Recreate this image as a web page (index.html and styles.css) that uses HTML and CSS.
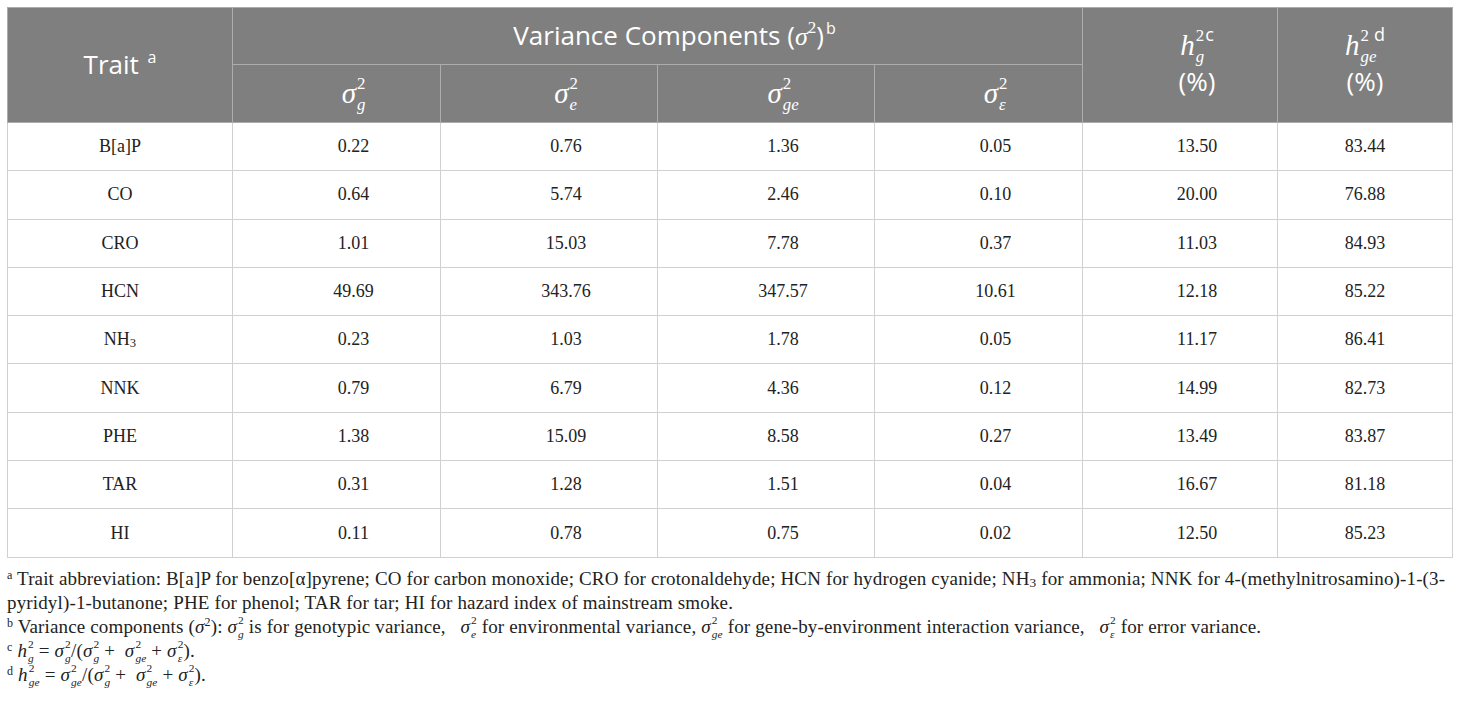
FILE: index.html
```html
<!DOCTYPE html>
<html lang="en">
<head>
  <meta charset="UTF-8">
  <title>Variance components</title>
  <link rel="stylesheet" href="styles.css">
</head>
<body>
  <table class="data">
    <colgroup>
      <col style="width:225px">
      <col style="width:208px">
      <col style="width:217px">
      <col style="width:217px">
      <col style="width:208px">
      <col style="width:195px">
      <col style="width:175px">
    </colgroup>
    <thead>
      <tr class="head-top">
        <th rowspan="2" class="mid">Trait <sup class="fn">a</sup></th>
        <th colspan="4" class="off">Variance Components (<i class="m">σ</i><sup class="sq">2</sup>)<sup class="fn">b</sup></th>
        <th rowspan="2" class="off">
          <div class="m big hh"><i>h</i><span class="ss"><span class="up">2<span class="fnl">c</span></span><span class="dn"><i>g</i></span></span></div>
          <div class="pct">(%)</div>
        </th>
        <th rowspan="2" class="mid">
          <div class="m big hh"><i>h</i><span class="ss"><span class="up">2 <span class="fnl">d</span></span><span class="dn"><i>ge</i></span></span></div>
          <div class="pct">(%)</div>
        </th>
      </tr>
      <tr class="head-sub">
        <th class="off"><span class="m big"><i>σ</i><span class="ss"><span class="up">2</span><span class="dn"><i>g</i></span></span></span></th>
        <th class="off"><span class="m big"><i>σ</i><span class="ss"><span class="up">2</span><span class="dn"><i>e</i></span></span></span></th>
        <th class="off"><span class="m big"><i>σ</i><span class="ss"><span class="up">2</span><span class="dn"><i>ge</i></span></span></span></th>
        <th class="off"><span class="m big"><i>σ</i><span class="ss"><span class="up">2</span><span class="dn"><i>ε</i></span></span></span></th>
      </tr>
    </thead>
    <tbody>
      <tr><td class="mid">B[a]P</td><td class="off">0.22</td><td class="off">0.76</td><td class="off">1.36</td><td class="off">0.05</td><td class="off">13.50</td><td class="mid">83.44</td></tr>
      <tr><td class="mid">CO</td><td class="off">0.64</td><td class="off">5.74</td><td class="off">2.46</td><td class="off">0.10</td><td class="off">20.00</td><td class="mid">76.88</td></tr>
      <tr><td class="mid">CRO</td><td class="off">1.01</td><td class="off">15.03</td><td class="off">7.78</td><td class="off">0.37</td><td class="off">11.03</td><td class="mid">84.93</td></tr>
      <tr><td class="mid">HCN</td><td class="off">49.69</td><td class="off">343.76</td><td class="off">347.57</td><td class="off">10.61</td><td class="off">12.18</td><td class="mid">85.22</td></tr>
      <tr><td class="mid">NH<sub class="chem">3</sub></td><td class="off">0.23</td><td class="off">1.03</td><td class="off">1.78</td><td class="off">0.05</td><td class="off">11.17</td><td class="mid">86.41</td></tr>
      <tr><td class="mid">NNK</td><td class="off">0.79</td><td class="off">6.79</td><td class="off">4.36</td><td class="off">0.12</td><td class="off">14.99</td><td class="mid">82.73</td></tr>
      <tr><td class="mid">PHE</td><td class="off">1.38</td><td class="off">15.09</td><td class="off">8.58</td><td class="off">0.27</td><td class="off">13.49</td><td class="mid">83.87</td></tr>
      <tr><td class="mid">TAR</td><td class="off">0.31</td><td class="off">1.28</td><td class="off">1.51</td><td class="off">0.04</td><td class="off">16.67</td><td class="mid">81.18</td></tr>
      <tr><td class="mid">HI</td><td class="off">0.11</td><td class="off">0.78</td><td class="off">0.75</td><td class="off">0.02</td><td class="off">12.50</td><td class="mid">85.23</td></tr>
    </tbody>
  </table>

  <!-- Footnotes -->
  <div class="notes">
    <p><sup>a</sup> Trait abbreviation: B[a]P for benzo[α]pyrene; CO for carbon monoxide; CRO for crotonaldehyde; HCN for hydrogen cyanide; NH<sub class="chem">3</sub> for ammonia; NNK for 4-(methylnitrosamino)-1-(3-<br>pyridyl)-1-butanone; PHE for phenol; TAR for tar; HI for hazard index of mainstream smoke.</p>
    <p><sup>b</sup> Variance components (<i>σ</i><sup class="sq">2</sup>): <span class="m"><i>σ</i><span class="ss"><span class="up">2</span><span class="dn"><i>g</i></span></span></span> is for genotypic variance, &nbsp; <span class="m"><i>σ</i><span class="ss"><span class="up">2</span><span class="dn"><i>e</i></span></span></span> for environmental variance, <span class="m"><i>σ</i><span class="ss"><span class="up">2</span><span class="dn"><i>ge</i></span></span></span> for gene-by-environment interaction variance, &nbsp; <span class="m"><i>σ</i><span class="ss"><span class="up">2</span><span class="dn"><i>ε</i></span></span></span> for error variance.</p>
    <p><sup>c</sup> <span class="m"><i>h</i><span class="ss"><span class="up">2</span><span class="dn"><i>g</i></span></span></span> = <span class="m"><i>σ</i><span class="ss"><span class="up">2</span><span class="dn"><i>g</i></span></span></span>/(<span class="m"><i>σ</i><span class="ss"><span class="up">2</span><span class="dn"><i>g</i></span></span></span> + &nbsp;<span class="m"><i>σ</i><span class="ss"><span class="up">2</span><span class="dn"><i>ge</i></span></span></span> + <span class="m"><i>σ</i><span class="ss"><span class="up">2</span><span class="dn"><i>ε</i></span></span></span>).</p>
    <p><sup>d</sup> <span class="m"><i>h</i><span class="ss"><span class="up">2</span><span class="dn"><i>ge</i></span></span></span> = <span class="m"><i>σ</i><span class="ss"><span class="up">2</span><span class="dn"><i>ge</i></span></span></span>/(<span class="m"><i>σ</i><span class="ss"><span class="up">2</span><span class="dn"><i>g</i></span></span></span> + &nbsp;<span class="m"><i>σ</i><span class="ss"><span class="up">2</span><span class="dn"><i>ge</i></span></span></span> + <span class="m"><i>σ</i><span class="ss"><span class="up">2</span><span class="dn"><i>ε</i></span></span></span>).</p>
  </div>
</body>
</html>
```

FILE: styles.css
```css
/* General Styling */
body {
  margin: 0;
  padding: 7px;
  background: #fff;
  color: #222;
  font-family: 'Liberation Serif', serif;
}

.data {
  width: 1445px;
  table-layout: fixed;
  border-collapse: collapse;
  border: 1px solid #c6c6c6;
}

/* Header */
.data th {
  background: #7f7f7f;
  color: #fff;
  font-family: 'Open Sans', sans-serif;
  font-weight: normal;
  font-size: 26px;
  border: 1px solid #acacac;
  text-align: center;
  vertical-align: middle;
  padding: 0;
  line-height: 1.2;
}

.head-top th {
  height: 56px;
}

.head-sub th {
  height: 57px;
}

.data th .fn {
  font-size: 16px;
  vertical-align: 11px;
  line-height: 0;
  margin-left: 2px;
}

.data th .sq {
  font-family: 'Liberation Serif', serif;
  font-size: 17px;
  vertical-align: 12px;
  line-height: 0;
}

.data th .fnl {
  font-family: 'Open Sans', sans-serif;
  font-style: normal;
  font-size: 18px;
  margin-left: 1px;
}

.data th .hh {
  line-height: 34px;
  margin-top: -4px;
}

.data th .pct {
  line-height: 34px;
  margin-top: 2px;
}

/* Body */
.data td {
  height: 47.3px;
  border: 1px solid #d0d0d0;
  text-align: center;
  vertical-align: middle;
  font-size: 18px;
  padding: 0;
}

.data .off {
  padding-left: 34px;
}

.chem {
  font-size: 0.7em;
  vertical-align: -2px;
  line-height: 0;
}

/* Math with stacked scripts */
.m {
  font-family: 'Liberation Serif', serif;
  white-space: nowrap;
}

.m i {
  font-style: italic;
}

.ss {
  display: inline-flex;
  flex-direction: column;
  align-items: flex-start;
  font-size: 0.6em;
  line-height: 1.2;
  vertical-align: 0.72em;
  margin: -0.6em 0 -0.8em 1px;
}

.big {
  font-size: 29px;
  line-height: 1.1;
}

.big .ss {
  font-size: 0.58em;
  line-height: 1.24;
  vertical-align: 0.82em;
}

/* Footnotes */
.notes {
  margin-top: 9px;
  font-size: 19px;
  line-height: 24px;
  letter-spacing: 0.15px;
}

.notes p {
  margin: 0;
}

.notes sup {
  font-size: 12px;
  vertical-align: 6px;
  line-height: 0;
}

.notes .sq {
  font-size: 12px;
  vertical-align: 7px;
}
```
